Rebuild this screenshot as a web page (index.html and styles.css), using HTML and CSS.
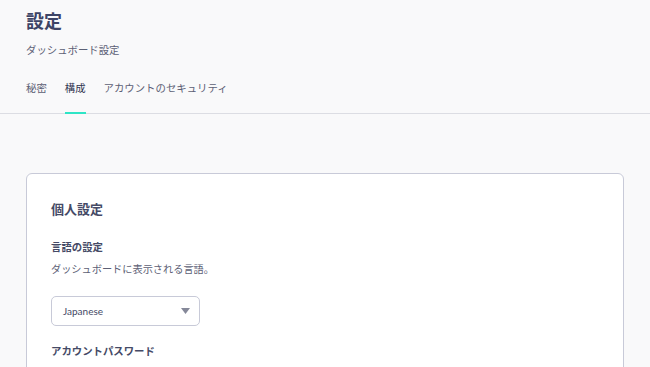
FILE: index.html
```html
<!DOCTYPE html>
<html lang="ja">
<head>
<meta charset="utf-8">
<link rel="stylesheet" href="styles.css">
</head>
<body>
<header class="header">
  <h1 class="title">設定</h1>
  <p class="subtitle">ダッシュボード設定</p>
  <nav class="tabs">
    <span class="tab">秘密</span>
    <span class="tab active">構成</span>
    <span class="tab">アカウントのセキュリティ</span>
  </nav>
</header>
<main class="main">
  <section class="card">
    <h2 class="card-title">個人設定</h2>
    <h3 class="label">言語の設定</h3>
    <p class="desc">ダッシュボードに表示される言語。</p>
    <div class="select">
      <span class="select-value">Japanese</span>
      <svg class="caret" width="9" height="6" viewBox="0 0 9 6"><path d="M0 0H9L4.5 6Z" fill="#858899"/></svg>
    </div>
    <h3 class="label pw">アカウントパスワード</h3>
  </section>
</main>
</body>
</html>
```
FILE: styles.css
```css
html, body { margin: 0; padding: 0; }
body {
  background: #f9f9fa;
  font-family: "Noto Sans CJK JP", "Noto Sans", sans-serif;
  color: #3f4462;
  width: 650px;
  height: 367px;
  overflow: hidden;
}
.header {
  padding: 0 0 0 26px;
  border-bottom: 1px solid #dcdde3;
}
.title {
  margin: 0;
  padding-top: 8px;
  font-size: 18px;
  line-height: 24px;
  font-weight: 700;
  color: #3d4466;
}
.subtitle {
  margin: 10px 0 0;
  font-size: 10.4px;
  line-height: 16px;
  color: #5c6075;
}
.tabs {
  display: flex;
  gap: 18px;
  margin-top: 22px;
}
.tab {
  font-size: 10.4px;
  line-height: 16px;
  color: #5c6075;
  padding-bottom: 16px;
  border-bottom: 2px solid transparent;
  margin-bottom: -1px;
}
.tab.active {
  color: #2f3450;
  border-bottom-color: #2ee5c6;
}
.main {
  padding: 59px 26px 0;
}
.card {
  background: #fff;
  border: 1px solid #c8cad8;
  border-radius: 6px;
  padding: 24px 24px 0;
  height: 180px;
}
.card-title {
  margin: 0;
  font-size: 13px;
  line-height: 22px;
  font-weight: 700;
  color: #454a66;
}
.label {
  margin: 19px 0 0;
  font-size: 10.4px;
  line-height: 16px;
  font-weight: 700;
  color: #454a66;
}
.desc {
  margin: 6px 0 0;
  font-size: 10.2px;
  line-height: 16px;
  color: #5c6075;
}
.select {
  margin-top: 19px;
  box-sizing: border-box;
  width: 149px;
  height: 30px;
  border: 1px solid #c8cad8;
  border-radius: 5px;
  display: flex;
  align-items: center;
  justify-content: space-between;
  padding: 0 9px 0 11px;
}
.select-value {
  font-family: Lato, "Noto Sans", sans-serif;
  font-size: 10px;
  color: #454a66;
}
.caret { display: block; }
.label.pw { margin-top: 17px; }
```
